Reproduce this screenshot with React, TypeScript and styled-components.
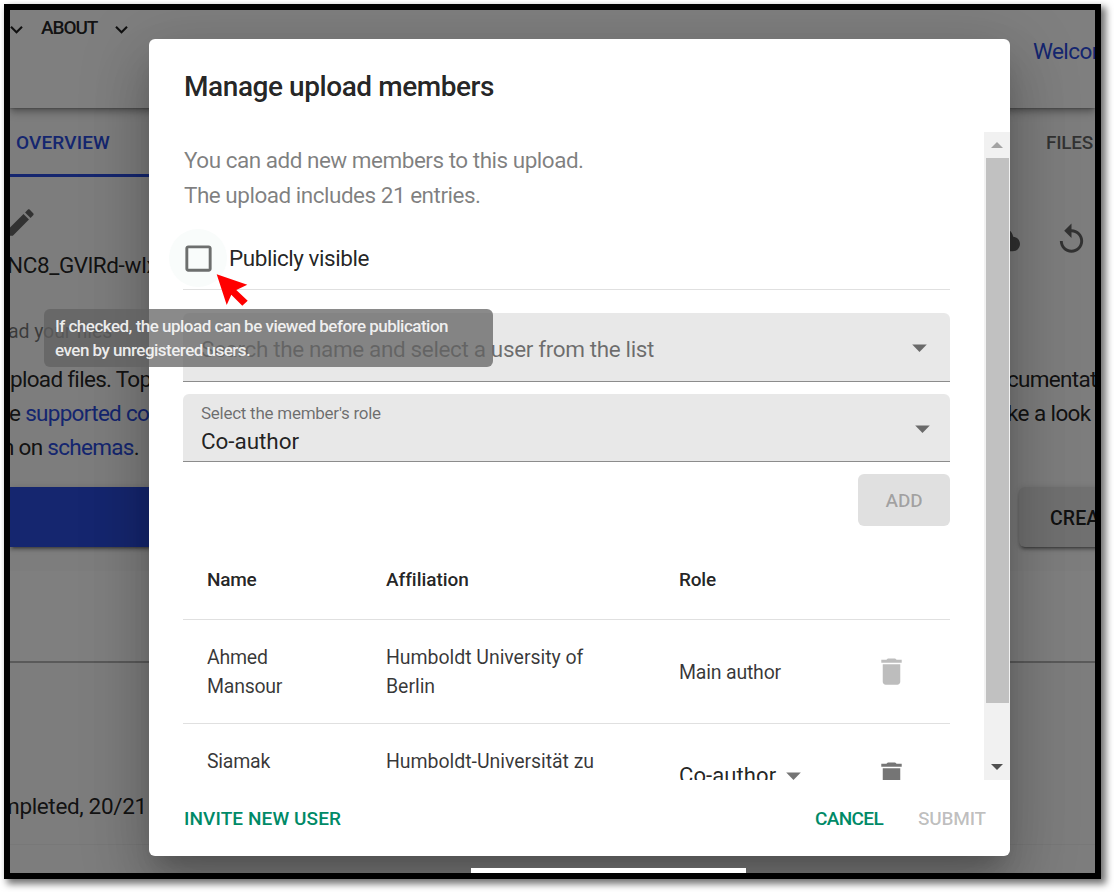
import React from 'react';
import styled, { createGlobalStyle } from 'styled-components';

const Global = createGlobalStyle`
  * { box-sizing: border-box; }
  body { margin: 0; background: #fff; font-family: Roboto, "Liberation Sans", sans-serif; color: rgba(0,0,0,.87); }
  p, h2 { margin: 0; font-weight: 400; }
  button { border: 0; background: none; padding: 0; font: inherit; color: inherit; }
`;

const Stage = styled.div`
  width: 1114px;
  height: 892px;
  padding: 4px;
  overflow: hidden;
`;

const Frame = styled.div`
  position: relative;
  width: 1097px;
  height: 875px;
  border: 6px solid #000;
  box-shadow: 4px 4px 7px 1px rgba(0, 0, 0, 0.55);
`;

const Viewport = styled.div`
  position: relative;
  height: 100%;
  overflow: hidden;
  background: #fafafa;
`;

/* ---------- page behind the dialog ---------- */

const Page = styled.div`
  display: flex;
  flex-direction: column;
  height: 100%;
  white-space: nowrap;
`;

const PageRow = styled.div<{ $h: number }>`
  display: grid;
  grid-template-columns: 998px 1fr;
  flex: none;
  height: ${p => p.$h}px;
`;

const AppHeader = styled(PageRow)`
  background: #fff;
  box-shadow: 0 3px 6px -1px rgba(0, 0, 0, 0.3), 0 6px 8px rgba(0, 0, 0, 0.14), 0 0 2px rgba(0, 0, 0, 0.35);
`;

const Nav = styled.div`
  display: flex;
  align-items: center;
  height: 38px;
  margin-left: -6px;
  font-size: 19px;
  font-weight: 500;
`;

const NavLabel = styled.span`
  width: 63px;
  margin-left: 12px;
  padding-bottom: 3px;
  letter-spacing: -1.1px;
`;

const ChevronSlot = styled.span`
  margin-left: 5px;
`;

const Welcome = styled.div`
  padding: 25px 0 0 25px;
  font-size: 22.5px;
  line-height: 33px;
  letter-spacing: -0.6px;
  color: #2a4cdf;
`;

const Tab = styled.div<{ $active?: boolean }>`
  height: 69px;
  padding-left: ${p => (p.$active ? 6 : 38)}px;
  border-bottom: 3px solid ${p => (p.$active ? '#2a4cdf' : 'transparent')};
  color: ${p => (p.$active ? '#2a4cdf' : 'rgba(0,0,0,.6)')};
  font-size: 19px;
  font-weight: 500;
  line-height: 70px;
  letter-spacing: ${p => (p.$active ? 0.15 : -0.27)}px;
`;

const EditSlot = styled.div`
  padding-top: 28px;
  margin-left: -7px;
  color: rgba(0, 0, 0, 0.6);
`;

const UploadTools = styled.div`
  display: flex;
  gap: 34px;
  margin-left: -23px;
  padding-top: 45px;
  color: rgba(0, 0, 0, 0.6);
`;

const BodyLine = styled.div<{ $shift?: number; $track?: number }>`
  margin-left: ${p => p.$shift ?? 0}px;
  font-size: 22.5px;
  line-height: 34px;
  letter-spacing: ${p => p.$track ?? -0.7}px;
  a { color: #2a4cdf; }
`;

const StepLabel = styled.div`
  margin-left: -2px;
  color: rgba(0, 0, 0, 0.54);
  font-size: 19.5px;
  line-height: 60px;
  letter-spacing: -0.1px;
`;

const raised = '0 4px 2px -3px rgba(0,0,0,.3), 0 3px 3px rgba(0,0,0,.2), 0 1px 7px rgba(0,0,0,.16)';

const PrimaryBar = styled.div`
  width: 700px;
  height: 60px;
  background: #2a4cdf;
  box-shadow: ${raised};
`;

const CreateButton = styled.button`
  width: 200px;
  height: 60px;
  margin-left: 11px;
  padding: 2px 0 0 31px;
  border-radius: 6px;
  background: #e0e0e0;
  box-shadow: ${raised};
  font-size: 19.5px;
  font-weight: 500;
  letter-spacing: 0.1px;
  text-align: left;
`;

const Card = styled.div<{ $h: number }>`
  flex: none;
  height: ${p => p.$h}px;
  background: #fff;
  border-bottom: 2px solid #b4b4b4;
`;

const ProcessCard = styled.div`
  flex: none;
  height: 182px;
  padding-top: 126px;
  border-bottom: 1px solid #f0f0f0;
`;

/* ---------- dialog ---------- */

const Backdrop = styled.div`
  position: absolute;
  inset: 0;
  padding: 29px 0 0 139px;
  background: rgba(0, 0, 0, 0.5);
`;

const Dialog = styled.section`
  display: flex;
  flex-direction: column;
  width: 861px;
  height: 817px;
  border-radius: 6px;
  background: #fff;
  box-shadow: 0 16px 22px -10px rgba(0, 0, 0, 0.2), 0 35px 55px 4px rgba(0, 0, 0, 0.14),
    0 13px 67px 12px rgba(0, 0, 0, 0.12);
`;

const Title = styled.h2`
  flex: none;
  height: 93px;
  padding: 30px 35px 0;
  font-size: 28px;
  font-weight: 500;
  line-height: 36px;
  letter-spacing: -0.43px;
`;

const ScrollArea = styled.div`
  display: flex;
  flex: none;
  height: 648px;
  overflow: hidden;
`;

const Content = styled.div`
  flex: 1;
  height: 100%;
  padding: 11px 34px 0 34px;
  overflow: hidden;
`;

const Intro = styled.p`
  height: 70px;
  padding-left: 1px;
  color: rgba(0, 0, 0, 0.5);
  font-size: 22.5px;
  line-height: 35px;
  letter-spacing: -0.49px;
`;

const CheckRow = styled.label`
  display: flex;
  align-items: center;
  height: 77px;
  padding-top: 14px;
  border-bottom: 1px solid #e0e0e0;
  font-size: 22.5px;
  letter-spacing: -0.45px;
`;

const CheckHalo = styled.span`
  display: grid;
  place-items: center;
  width: 58px;
  height: 58px;
  margin: 0 2px 0 -14px;
  border-radius: 50%;
  background: #f9fcfb;
  color: rgba(0, 0, 0, 0.56);
`;

const Field = styled.div<{ $h: number; $top: number }>`
  display: flex;
  align-items: center;
  justify-content: space-between;
  height: ${p => p.$h}px;
  margin-top: ${p => p.$top}px;
  padding: 0 13px 0 18px;
  border-bottom: 1.5px solid #8c8c8c;
  border-radius: 6px 6px 0 0;
  background: #e8e8e8;
  color: rgba(0, 0, 0, 0.54);
`;

const Placeholder = styled.span`
  padding-top: 4px;
  font-size: 22.5px;
  letter-spacing: -0.36px;
`;

const FieldStack = styled.span`
  display: flex;
  flex-direction: column;
  padding-top: 3px;
`;

const FieldLabel = styled.span`
  font-size: 17px;
  line-height: 24px;
  letter-spacing: -0.26px;
`;

const FieldValue = styled.span`
  color: rgba(0, 0, 0, 0.87);
  font-size: 22.5px;
  line-height: 32px;
  letter-spacing: -0.06px;
`;

const SearchArrow = styled.span`
  display: flex;
`;

const RoleArrow = styled.span`
  display: flex;
  margin-right: -3px;
  padding-top: 2px;
`;

const AddRow = styled.div`
  display: flex;
  justify-content: flex-end;
  padding-top: 12px;
`;

const AddButton = styled.button`
  width: 92px;
  height: 52px;
  border-radius: 6px;
  background: #e0e0e0;
  color: rgba(0, 0, 0, 0.28);
  font-size: 19px;
  font-weight: 500;
  letter-spacing: -0.14px;
`;

const Row = styled.div<{ $head?: boolean }>`
  display: grid;
  grid-template-columns: 180px 292px 178px 1fr;
  align-items: center;
  height: ${p => (p.$head ? 81 : 104)}px;
  margin-top: ${p => (p.$head ? 13 : 0)}px;
  border-bottom: 1px solid #e0e0e0;
  font-size: ${p => (p.$head ? 19 : 19.5)}px;
  font-weight: ${p => (p.$head ? 500 : 400)};
  line-height: 29px;
  letter-spacing: -0.05px;
  color: ${p => (p.$head ? 'rgba(0,0,0,.87)' : 'rgba(0,0,0,.78)')};
`;

const Cell = styled.div`
  padding: 1px 23px 0;
  &:first-child { padding-left: 24px; letter-spacing: -0.25px; }
  &:nth-child(3) { padding-left: 24px; letter-spacing: -0.2px; }
`;

const RoleSelect = styled.div`
  display: flex;
  align-items: center;
  padding-left: 24px;
  font-size: 22px;
  letter-spacing: 0.1px;
  white-space: nowrap;
  color: rgba(0, 0, 0, 0.87);
  svg { flex: none; color: rgba(0, 0, 0, 0.54); }
`;

const DeleteCell = styled.div<{ $disabled?: boolean }>`
  display: flex;
  justify-content: center;
  color: ${p => (p.$disabled ? '#bdbdbd' : '#757575')};
`;

const Scrollbar = styled.div`
  display: flex;
  flex-direction: column;
  align-items: center;
  flex: none;
  width: 26px;
  background: #f1f1f1;
`;

const ScrollButton = styled.div<{ $up?: boolean }>`
  display: grid;
  place-items: center;
  width: 26px;
  height: 26px;
  color: ${p => (p.$up ? '#a3a3a3' : '#505050')};
`;

const Thumb = styled.div`
  width: 23px;
  height: 545px;
  margin-bottom: auto;
  background: #c1c1c1;
`;

const Actions = styled.div`
  display: flex;
  align-items: center;
  height: 76px;
  padding: 0 24px 0 35px;
`;

const ActionButton = styled.button<{ $off?: boolean; $track: number }>`
  color: ${p => (p.$off ? 'rgba(0,0,0,.26)' : '#008a67')};
  font-size: 19px;
  font-weight: 500;
  letter-spacing: ${p => p.$track}px;
  white-space: nowrap;
  &:first-child { margin-right: auto; }
  &:last-child { margin-left: 35px; }
`;

const Snackbar = styled.div`
  position: absolute;
  left: 461px;
  bottom: 0;
  width: 275px;
  height: 5px;
  background: #fff;
`;

const Tooltip = styled.div`
  position: absolute;
  left: 34px;
  top: 299px;
  width: 449px;
  height: 58px;
  padding: 5px 11px;
  border-radius: 6px;
  background: rgba(97, 97, 97, 0.74);
  color: rgba(255, 255, 255, 0.88);
  font-size: 17px;
  font-weight: 500;
  line-height: 24px;
  letter-spacing: -0.51px;
  white-space: nowrap;
`;

const Pointer = styled.svg`
  position: absolute;
  left: 206px;
  top: 264px;
`;

const Icon = ({ d, size = 35 }: { d: string; size?: number }) => (
  <svg width={size} height={size} viewBox="0 0 24 24" fill="currentColor" display="block">
    <path d={d} />
  </svg>
);

const CHEVRON = 'M16.59 8.59L12 13.17 7.41 8.59 6 10l6 6 6-6z';
const EDIT =
  'M3 17.25V21h3.75L17.81 9.94l-3.75-3.75L3 17.25zM20.71 7.04c.39-.39.39-1.02 0-1.41l-2.34-2.34c-.39-.39-1.02-.39-1.41 0l-1.83 1.83 3.75 3.75 1.83-1.83z';
const CLOUD =
  'M19.35 10.04C18.67 6.59 15.64 4 12 4 9.11 4 6.6 5.64 5.35 8.04 2.34 8.36 0 10.91 0 14c0 3.31 2.69 6 6 6h13c2.76 0 5-2.24 5-5 0-2.64-2.05-4.78-4.65-4.96zM17 13l-5 5-5-5h3V9h4v4h3z';
const REPLAY =
  'M12 5V1L7 6l5 5V7c3.31 0 6 2.69 6 6s-2.69 6-6 6-6-2.69-6-6H4c0 4.42 3.58 8 8 8s8-3.58 8-8-3.58-8-8-8z';
const BOX =
  'M19 5v14H5V5h14m0-2H5c-1.1 0-2 .9-2 2v14c0 1.1.9 2 2 2h14c1.1 0 2-.9 2-2V5c0-1.1-.9-2-2-2z';
const DROP = 'M7 10l5 5 5-5z';
const TRASH = 'M6 19c0 1.1.9 2 2 2h8c1.1 0 2-.9 2-2V7H6v12zM19 4h-3.5l-1-1h-5l-1 1H5v2h14V4z';

function BackgroundPage() {
  return (
    <Page>
      <AppHeader $h={98}>
        <Nav>
          <Icon d={CHEVRON} size={25} />
          <NavLabel>ABOUT</NavLabel>
          <ChevronSlot><Icon d={CHEVRON} size={25} /></ChevronSlot>
        </Nav>
        <Welcome>Welcome</Welcome>
      </AppHeader>
      <PageRow $h={69}>
        <Tab $active>OVERVIEW</Tab>
        <Tab>FILES</Tab>
      </PageRow>
      <PageRow $h={71}>
        <EditSlot><Icon d={EDIT} /></EditSlot>
        <UploadTools>
          <Icon d={CLOUD} />
          <Icon d={REPLAY} />
        </UploadTools>
      </PageRow>
      <PageRow $h={54}>
        <BodyLine $shift={-3} $track={-0.4}>NC8_GVlRd-wIx</BodyLine>
      </PageRow>
      <PageRow $h={60}>
        <StepLabel>ad your files</StepLabel>
      </PageRow>
      <PageRow $h={34}>
        <BodyLine>pload files. Top</BodyLine>
        <BodyLine $shift={-1}>cumentation</BodyLine>
      </PageRow>
      <PageRow $h={34}>
        <BodyLine $shift={-1}>e <a>supported co</a></BodyLine>
        <BodyLine $shift={-1} $track={-0.6}>ke a look</BodyLine>
      </PageRow>
      <PageRow $h={57}>
        <BodyLine $shift={-8}>n on <a>schemas</a>.</BodyLine>
      </PageRow>
      <PageRow $h={84}>
        <PrimaryBar />
        <CreateButton>CREATE</CreateButton>
      </PageRow>
      <Card $h={92} />
      <ProcessCard>
        <BodyLine $shift={-10} $track={-0.35}>mpleted, 20/21</BodyLine>
      </ProcessCard>
    </Page>
  );
}

function MembersDialog() {
  return (
    <Dialog>
      <Title>Manage upload members</Title>
      <ScrollArea>
        <Content>
          <Intro>
            You can add new members to this upload.
            <br />
            The upload includes 21 entries.
          </Intro>
          <CheckRow>
            <CheckHalo><Icon d={BOX} /></CheckHalo>
            Publicly visible
          </CheckRow>
          <Field $h={69} $top={23}>
            <Placeholder>Search the name and select a user from the list</Placeholder>
            <SearchArrow><Icon d={DROP} /></SearchArrow>
          </Field>
          <Field $h={68} $top={12}>
            <FieldStack>
              <FieldLabel>Select the member's role</FieldLabel>
              <FieldValue>Co-author</FieldValue>
            </FieldStack>
            <RoleArrow><Icon d={DROP} /></RoleArrow>
          </Field>
          <AddRow>
            <AddButton>ADD</AddButton>
          </AddRow>
          <Row $head>
            <Cell>Name</Cell>
            <Cell>Affiliation</Cell>
            <Cell>Role</Cell>
          </Row>
          <Row>
            <Cell>Ahmed<br />Mansour</Cell>
            <Cell>Humboldt University of<br />Berlin</Cell>
            <Cell>Main author</Cell>
            <DeleteCell $disabled><Icon d={TRASH} /></DeleteCell>
          </Row>
          <Row>
            <Cell>Siamak<br />&nbsp;</Cell>
            <Cell>Humboldt-Universität zu<br />&nbsp;</Cell>
            <RoleSelect>Co-author<Icon d={DROP} /></RoleSelect>
            <DeleteCell><Icon d={TRASH} /></DeleteCell>
          </Row>
        </Content>
        <Scrollbar>
          <ScrollButton $up>
            <svg width="12" height="6"><path d="M0 6L6 0L12 6z" fill="currentColor" /></svg>
          </ScrollButton>
          <Thumb />
          <ScrollButton>
            <svg width="12" height="6"><path d="M0 0H12L6 6z" fill="currentColor" /></svg>
          </ScrollButton>
        </Scrollbar>
      </ScrollArea>
      <Actions>
        <ActionButton $track={0.1}>INVITE NEW USER</ActionButton>
        <ActionButton $track={-0.65}>CANCEL</ActionButton>
        <ActionButton $off $track={-0.21}>SUBMIT</ActionButton>
      </Actions>
    </Dialog>
  );
}

export default function App() {
  return (
    <>
      <Global />
      <Stage>
        <Frame>
          <Viewport>
            <BackgroundPage />
            <Backdrop>
              <MembersDialog />
            </Backdrop>
            <Snackbar />
            <Tooltip>
              If checked, the upload can be viewed before publication
              <br />
              even by unregistered users.
            </Tooltip>
            <Pointer width="34" height="34" viewBox="0 0 34 34">
              <path d="M0.7 0.3L31.3 10.7L20.3 16L31.7 26.7L26.3 31.7L15.3 20.7L10.7 31z" fill="#f00" />
            </Pointer>
          </Viewport>
        </Frame>
      </Stage>
    </>
  );
}
